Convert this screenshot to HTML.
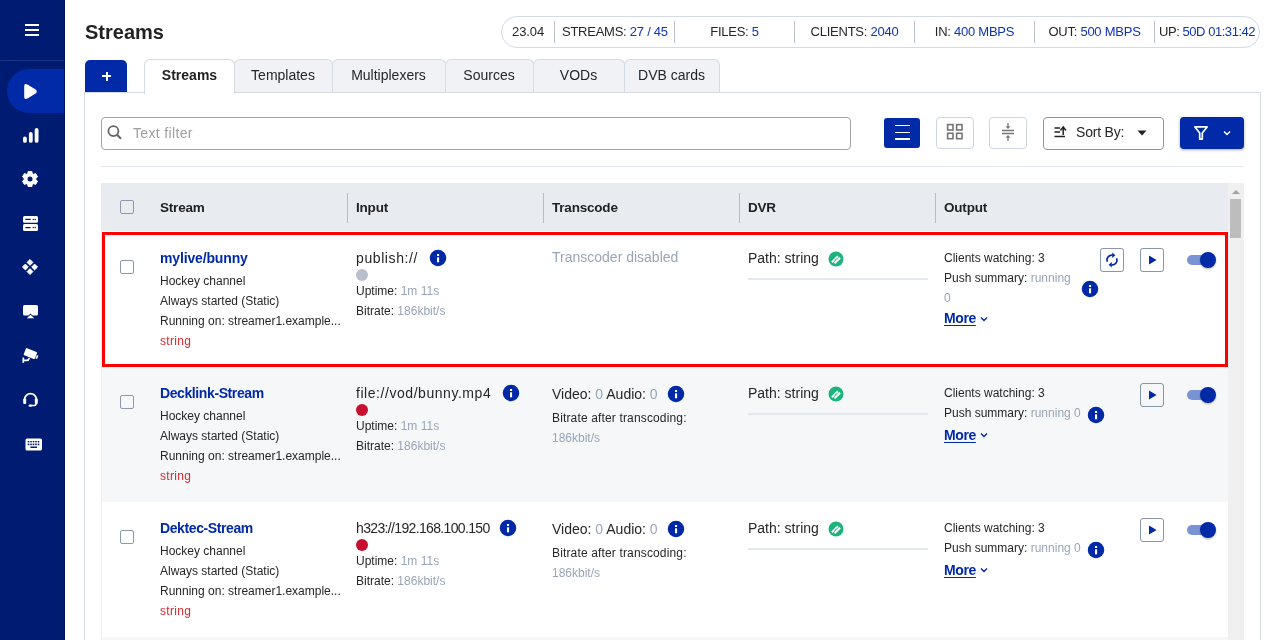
<!DOCTYPE html>
<html><head><meta charset="utf-8"><title>Streams</title>
<style>
html,body{margin:0;padding:0;width:1280px;height:640px;overflow:hidden;background:#fff;}
body{position:relative;font-family:"Liberation Sans",sans-serif;}
.t{position:absolute;white-space:nowrap;line-height:1;will-change:transform;}
.b{position:absolute;box-sizing:content-box;}
</style></head><body>
<div class="b" style="left:0px;top:0px;width:64px;height:640px;background:#001c72;"></div>
<div class="b" style="left:64px;top:0px;width:1px;height:640px;background:#00145c;"></div>
<div class="b" style="left:0px;top:60px;width:64px;height:1px;background:#1d3582;"></div>
<div class="b" style="left:25px;top:24px;width:14px;height:2px;background:#fff;"></div>
<div class="b" style="left:25px;top:29px;width:14px;height:2px;background:#fff;"></div>
<div class="b" style="left:25px;top:34px;width:14px;height:2px;background:#fff;"></div>
<div class="b" style="left:7px;top:69px;width:57px;height:44px;background:#002aa8;border-radius:22px 0 0 22px;"></div>
<svg class="b" style="left:21px;top:82px;" width="18" height="19" viewBox="0 0 18 19"><path d="M4 4.2 Q4 2 6 3.1 L14.2 8.2 Q15.8 9.5 14.2 10.8 L6 15.9 Q4 17 4 14.8 Z" fill="#fff" stroke="#fff" stroke-width="1.6" stroke-linejoin="round"/></svg>
<svg class="b" style="left:22px;top:127px;" width="18" height="17" viewBox="0 0 18 17"><rect x="1" y="9.5" width="3.8" height="6.3" rx="1.9" fill="#fff"/><rect x="6.9" y="5" width="3.8" height="10.8" rx="1.9" fill="#fff"/><rect x="12.7" y="1" width="3.8" height="14.8" rx="1.9" fill="#fff"/></svg>
<svg class="b" style="left:22px;top:171px;" width="16" height="16" viewBox="0 0 16 16"><path d="M6.11 0.43 L9.89 0.43 L10.21 2.53 L11.63 3.35 L13.61 2.58 L15.50 5.85 L13.84 7.18 L13.84 8.82 L15.50 10.15 L13.61 13.42 L11.63 12.65 L10.21 13.47 L9.89 15.57 L6.11 15.57 L5.79 13.47 L4.37 12.65 L2.39 13.42 L0.50 10.15 L2.16 8.82 L2.16 7.18 L0.50 5.85 L2.39 2.58 L4.37 3.35 L5.79 2.53 Z" fill="#fff" stroke="#fff" stroke-width="1" stroke-linejoin="round"/><circle cx="8" cy="8" r="2.5" fill="#001c72"/></svg>
<svg class="b" style="left:23px;top:216px;" width="15" height="15" viewBox="0 0 15 15"><rect x="0" y="0" width="15" height="6.8" rx="1.5" fill="#fff"/><rect x="0" y="8.1" width="15" height="6.8" rx="1.5" fill="#fff"/><rect x="2.2" y="2.8" width="5.6" height="1.3" rx=".6" fill="#001c72"/><circle cx="10.3" cy="3.4" r=".75" fill="#001c72"/><circle cx="12.2" cy="3.4" r=".75" fill="#001c72"/><rect x="2.2" y="10.9" width="5.6" height="1.3" rx=".6" fill="#001c72"/><circle cx="10.3" cy="11.5" r=".75" fill="#001c72"/><circle cx="12.2" cy="11.5" r=".75" fill="#001c72"/></svg>
<svg class="b" style="left:22px;top:259.2px;" width="16" height="16" viewBox="0 0 16 16"><path d="M8 0.5000000000000004 L10.9 3.4000000000000004 L8 6.300000000000001 L5.1 3.4000000000000004 Z" fill="#fff" stroke="#fff" stroke-width="1" stroke-linejoin="round"/><path d="M3.4000000000000004 5.1 L6.300000000000001 8 L3.4000000000000004 10.9 L0.5000000000000004 8 Z" fill="#fff" stroke="#fff" stroke-width="1" stroke-linejoin="round"/><path d="M12.6 5.1 L15.5 8 L12.6 10.9 L9.7 8 Z" fill="#fff" stroke="#fff" stroke-width="1" stroke-linejoin="round"/><path d="M8 9.7 L10.9 12.6 L8 15.5 L5.1 12.6 Z" fill="#fff" stroke="#fff" stroke-width="1" stroke-linejoin="round"/></svg>
<svg class="b" style="left:22px;top:303px;" width="17" height="17" viewBox="0 0 17 17"><rect x="1" y="2" width="15" height="10.6" rx="1.6" fill="#fff"/><path d="M4.8 15.2 L8.5 11.4 L12.2 15.2 Z" fill="#fff" stroke="#001c72" stroke-width="1.1"/><path d="M4.8 15.2 L8.5 11.8 L12.2 15.2 Z" fill="#fff"/></svg>
<svg class="b" style="left:21px;top:346px;" width="19" height="18" viewBox="0 0 19 18"><g transform="translate(0 1.5) rotate(22 9 7)"><rect x="3" y="2.2" width="12" height="7.6" rx="1" fill="#fff"/><rect x="15.6" y="5" width="1.6" height="3.6" fill="#fff"/></g><path d="M2.3 11.5 V16.8 M2.3 14.4 H6 Q7.6 14.4 8.3 12" stroke="#fff" stroke-width="1.7" fill="none"/></svg>
<svg class="b" style="left:22px;top:391px;" width="17" height="17" viewBox="0 0 17 17"><path d="M2.6 10 V8.5 A5.9 5.9 0 0 1 14.4 8.5 V10" stroke="#fff" stroke-width="1.8" fill="none"/><rect x="1.2" y="7.6" width="3" height="5.4" rx="1" fill="#fff"/><rect x="12.8" y="7.6" width="3" height="5.4" rx="1" fill="#fff"/><path d="M14.2 12.5 Q14.2 14.6 11.5 14.6 H8.4" stroke="#fff" stroke-width="1.5" fill="none"/><rect x="6.6" y="13.5" width="3.4" height="2.3" rx="1" fill="#fff"/></svg>
<svg class="b" style="left:24.5px;top:437.5px;" width="18" height="13" viewBox="0 0 18 13"><rect x="0.5" y="0.5" width="16.5" height="12" rx="1.6" fill="#fff"/><rect x="2.7" y="3" width="1.6" height="1.4" fill="#001c72"/><rect x="2.7" y="5.6" width="1.6" height="1.6" fill="#001c72"/><rect x="5.2" y="3" width="1.6" height="1.4" fill="#001c72"/><rect x="5.2" y="5.6" width="1.6" height="1.6" fill="#001c72"/><rect x="7.7" y="3" width="1.6" height="1.4" fill="#001c72"/><rect x="7.7" y="5.6" width="1.6" height="1.6" fill="#001c72"/><rect x="10.2" y="3" width="1.6" height="1.4" fill="#001c72"/><rect x="10.2" y="5.6" width="1.6" height="1.6" fill="#001c72"/><rect x="12.7" y="3" width="1.6" height="1.4" fill="#001c72"/><rect x="12.7" y="5.6" width="1.6" height="1.6" fill="#001c72"/><rect x="5.2" y="8.6" width="7" height="1.4" rx=".7" fill="#001c72"/></svg>
<div class="t " style="left:84.5px;top:21.67px;font-size:20px;font-weight:bold;color:#222;">Streams</div>
<div class="b" style="left:501px;top:16px;width:757px;height:30px;border:1px solid #d5dbe3;border-radius:16px;"></div>
<div class="b" style="left:554px;top:21px;width:1px;height:22px;background:#b8c0cb;"></div>
<div class="b" style="left:674px;top:21px;width:1px;height:22px;background:#b8c0cb;"></div>
<div class="b" style="left:794px;top:21px;width:1px;height:22px;background:#b8c0cb;"></div>
<div class="b" style="left:914px;top:21px;width:1px;height:22px;background:#b8c0cb;"></div>
<div class="b" style="left:1034px;top:21px;width:1px;height:22px;background:#b8c0cb;"></div>
<div class="b" style="left:1154px;top:21px;width:1px;height:22px;background:#b8c0cb;"></div>
<div class="t " style="left:512px;top:25.00px;font-size:13px;color:#262626;letter-spacing:-0.1px;">23.04</div>
<div class="t " style="left:562px;top:25.00px;font-size:13px;color:#262626;letter-spacing:-0.25px;">STREAMS: <span style="color:#0f34b5">27 / 45</span></div>
<div class="t " style="left:674px;top:25.00px;font-size:13px;color:#262626;letter-spacing:-0.25px;width:121px;text-align:center;">FILES: <span style="color:#0f34b5">5</span></div>
<div class="t " style="left:794px;top:25.00px;font-size:13px;color:#262626;letter-spacing:-0.25px;width:121px;text-align:center;">CLIENTS: <span style="color:#0f34b5">2040</span></div>
<div class="t " style="left:914px;top:25.00px;font-size:13px;color:#262626;letter-spacing:-0.25px;width:121px;text-align:center;">IN: <span style="color:#0f34b5">400 MBPS</span></div>
<div class="t " style="left:1034px;top:25.00px;font-size:13px;color:#262626;letter-spacing:-0.25px;width:121px;text-align:center;">OUT: <span style="color:#0f34b5">500 MBPS</span></div>
<div class="t " style="left:1159px;top:25.00px;font-size:13px;color:#262626;letter-spacing:-0.45px;">UP: <span style="color:#0f34b5">50D 01:31:42</span></div>
<div class="b" style="left:84px;top:92px;width:1175px;height:600px;border:1px solid #d5dbe3;background:#fff;"></div>
<div class="b" style="left:85px;top:60px;width:42px;height:32px;background:#002aa8;border-radius:5px 5px 0 0;"></div>
<div class="b" style="left:102px;top:75px;width:9px;height:2px;background:#fff;"></div>
<div class="b" style="left:105.5px;top:71.5px;width:2px;height:9px;background:#fff;"></div>
<div class="b" style="left:144px;top:59px;width:89px;height:34px;background:#fff;border:1px solid #d5dbe3;border-bottom:none;border-radius:6px 6px 0 0;z-index:2;"></div>
<div class="t " style="left:144px;top:68.15px;font-size:14px;font-weight:bold;color:#222;width:91px;text-align:center;z-index:3;">Streams</div>
<div class="b" style="left:234px;top:59px;width:97px;height:32px;background:#f0f2f6;border:1px solid #d5dbe3;border-bottom:none;border-radius:6px 6px 0 0;"></div>
<div class="t " style="left:234px;top:68.15px;font-size:14px;color:#262626;width:98px;text-align:center;">Templates</div>
<div class="b" style="left:332px;top:59px;width:112px;height:32px;background:#f0f2f6;border:1px solid #d5dbe3;border-bottom:none;border-radius:6px 6px 0 0;"></div>
<div class="t " style="left:332px;top:68.15px;font-size:14px;color:#262626;width:113px;text-align:center;">Multiplexers</div>
<div class="b" style="left:445px;top:59px;width:87px;height:32px;background:#f0f2f6;border:1px solid #d5dbe3;border-bottom:none;border-radius:6px 6px 0 0;"></div>
<div class="t " style="left:445px;top:68.15px;font-size:14px;color:#262626;width:88px;text-align:center;">Sources</div>
<div class="b" style="left:533px;top:59px;width:90px;height:32px;background:#f0f2f6;border:1px solid #d5dbe3;border-bottom:none;border-radius:6px 6px 0 0;"></div>
<div class="t " style="left:533px;top:68.15px;font-size:14px;color:#262626;width:91px;text-align:center;">VODs</div>
<div class="b" style="left:624px;top:59px;width:94px;height:32px;background:#f0f2f6;border:1px solid #d5dbe3;border-bottom:none;border-radius:6px 6px 0 0;"></div>
<div class="t " style="left:624px;top:68.15px;font-size:14px;color:#262626;width:95px;text-align:center;">DVB cards</div>
<div class="b" style="left:101px;top:117px;width:748px;height:31px;border:1px solid #a3a3a3;border-radius:4px;"></div>
<svg class="b" style="left:106px;top:124px;" width="17" height="17" viewBox="0 0 17 17"><circle cx="7.4" cy="7.1" r="5" stroke="#666" stroke-width="1.8" fill="none"/><path d="M11 10.7 L15 14.7" stroke="#666" stroke-width="2.1"/></svg>
<div class="t " style="left:133px;top:126.35px;font-size:14px;color:#9e9e9e;letter-spacing:0.35px;">Text filter</div>
<div class="b" style="left:884px;top:118px;width:36px;height:30px;background:#002aa8;border-radius:3px;"></div>
<div class="b" style="left:894.5px;top:124.6px;width:15px;height:1.6px;background:#fff;"></div>
<div class="b" style="left:894.5px;top:131.6px;width:15px;height:1.6px;background:#fff;"></div>
<div class="b" style="left:894.5px;top:138px;width:15px;height:1.6px;background:#fff;"></div>
<div class="b" style="left:936px;top:117px;width:36px;height:30px;border:1px solid #cdd5df;border-radius:4px;"></div>
<svg class="b" style="left:946px;top:123px;" width="18" height="18" viewBox="0 0 18 18"><rect x="1.6" y="1.6" width="5.4" height="5.4" stroke="#757575" stroke-width="1.6" fill="none"/><rect x="10.6" y="1.6" width="5.4" height="5.4" stroke="#757575" stroke-width="1.6" fill="none"/><rect x="1.6" y="10.3" width="5.4" height="5.4" stroke="#757575" stroke-width="1.6" fill="none"/><rect x="10.6" y="10.3" width="5.4" height="5.4" stroke="#757575" stroke-width="1.6" fill="none"/></svg>
<div class="b" style="left:989px;top:117px;width:36px;height:30px;border:1px solid #cdd5df;border-radius:4px;"></div>
<svg class="b" style="left:1000px;top:121px;" width="16" height="22" viewBox="0 0 16 22"><path d="M2 9.5 H14 M2 12.5 H14" stroke="#777" stroke-width="1.3"/><path d="M8 2 V7" stroke="#777" stroke-width="1.3"/><path d="M5.6 5.2 L8 8 L10.4 5.2 Z" fill="#777"/><path d="M8 15 V20" stroke="#777" stroke-width="1.3"/><path d="M5.6 16.8 L8 14 L10.4 16.8 Z" fill="#777"/></svg>
<div class="b" style="left:1043px;top:117px;width:119px;height:31px;border:1px solid #8896ab;border-radius:4px;"></div>
<svg class="b" style="left:1053px;top:125px;" width="16" height="14" viewBox="0 0 16 14"><path d="M1.5 3 H7 M1.5 7 H7 M1.5 11.5 H12" stroke="#222" stroke-width="1.5"/><path d="M10.2 10 V2.8" stroke="#222" stroke-width="1.5"/><path d="M7.4 5.5 L10.2 2 L13 5.5" stroke="#222" stroke-width="1.5" fill="none"/></svg>
<div class="t " style="left:1076px;top:125.15px;font-size:14px;color:#262626;letter-spacing:-0.2px;">Sort By:</div>
<svg class="b" style="left:1136px;top:129px;" width="12" height="8" viewBox="0 0 12 8"><path d="M1.5 1.5 H10.5 L6 6.5 Z" fill="#222"/></svg>
<div class="b" style="left:1180px;top:117px;width:64px;height:32px;background:#002aa8;border-radius:4px;box-shadow:0 1px 3px rgba(0,0,0,.35);"></div>
<svg class="b" style="left:1192px;top:124px;" width="18" height="18" viewBox="0 0 18 18"><path d="M2.9 2.9 H15.1 L10.3 9.1 V15.1 H7.7 V9.1 Z" stroke="#fff" stroke-width="1.7" fill="none" stroke-linejoin="round"/></svg>
<svg class="b" style="left:1222px;top:129px;" width="10" height="8" viewBox="0 0 10 8"><path d="M2 2.5 L5 5.5 L8 2.5" stroke="#fff" stroke-width="1.5" fill="none"/></svg>
<div class="b" style="left:101px;top:166px;width:1142px;height:1px;background:#e3e8ee;"></div>
<div class="b" style="left:101px;top:183px;width:1127px;height:48px;background:#e8ebf0;"></div>
<div class="b" style="left:120px;top:200px;width:12px;height:12px;border:1.6px solid #8d99ab;border-radius:2px;"></div>
<div class="b" style="left:347px;top:193px;width:1px;height:30px;background:#b5bdc8;"></div>
<div class="b" style="left:543px;top:193px;width:1px;height:30px;background:#b5bdc8;"></div>
<div class="b" style="left:739px;top:193px;width:1px;height:30px;background:#b5bdc8;"></div>
<div class="b" style="left:935px;top:193px;width:1px;height:30px;background:#b5bdc8;"></div>
<div class="t " style="left:160px;top:201.07px;font-size:13.5px;font-weight:bold;color:#222;letter-spacing:-0.2px;">Stream</div>
<div class="t " style="left:356px;top:201.07px;font-size:13.5px;font-weight:bold;color:#222;letter-spacing:-0.2px;">Input</div>
<div class="t " style="left:552px;top:201.07px;font-size:13.5px;font-weight:bold;color:#222;letter-spacing:-0.2px;">Transcode</div>
<div class="t " style="left:748px;top:201.07px;font-size:13.5px;font-weight:bold;color:#222;letter-spacing:-0.2px;">DVR</div>
<div class="t " style="left:944px;top:201.07px;font-size:13.5px;font-weight:bold;color:#222;letter-spacing:-0.2px;">Output</div>
<div class="b" style="left:1228px;top:183px;width:16px;height:457px;background:#f0f0f0;"></div>
<svg class="b" style="left:1228px;top:186px;" width="16" height="10" viewBox="0 0 16 10"><path d="M4 8 L8 4 L12 8 Z" fill="#a3a3a3"/></svg>
<div class="b" style="left:1230px;top:199px;width:11px;height:39px;background:#bdbdbd;"></div>
<div class="b" style="left:101px;top:231px;width:1px;height:409px;background:#eef0f3;"></div>
<div class="b" style="left:102px;top:637px;width:1126px;height:10px;background:#f6f7f9;"></div>
<div class="b" style="left:120px;top:260px;width:12px;height:12px;border:1.6px solid #8d99ab;border-radius:2px;"></div>
<div class="t " style="left:160px;top:251.15px;font-size:14px;font-weight:bold;color:#0029a8;letter-spacing:-0.15px;">mylive/bunny</div>
<div class="t " style="left:160px;top:274.84px;font-size:12px;color:#262626;">Hockey channel</div>
<div class="t " style="left:160px;top:294.84px;font-size:12px;color:#262626;">Always started (Static)</div>
<div class="t " style="left:160px;top:314.84px;font-size:12px;color:#262626;">Running on: streamer1.example...</div>
<div class="t " style="left:160px;top:334.84px;font-size:12px;color:#d42a2e;letter-spacing:0.3px;">string</div>
<div class="t " style="left:356px;top:250.65px;font-size:14px;color:#262626;letter-spacing:0.6px;">publish://</div>
<svg class="b" style="left:429px;top:249px;" width="18" height="18" viewBox="0 0 18 18"><circle cx="9" cy="9" r="8.25" fill="#0029a8"/><rect x="8" y="5" width="2.1" height="2" fill="#fff"/><rect x="8" y="8.3" width="2.1" height="5" fill="#fff"/></svg>
<div class="b" style="left:356px;top:269px;width:12px;height:12px;background:#b9bfcc;border-radius:6px;"></div>
<div class="t " style="left:356px;top:285.24px;font-size:12px;color:#262626;">Uptime: <span style="color:#9aa5b8">1m 11s</span></div>
<div class="t " style="left:356px;top:305.14px;font-size:12px;color:#262626;">Bitrate: <span style="color:#9aa5b8">186kbit/s</span></div>
<div class="t " style="left:552px;top:250.15px;font-size:14px;color:#9aa5b8;">Transcoder disabled</div>
<div class="t " style="left:748px;top:251.15px;font-size:14px;color:#262626;">Path: string</div>
<svg class="b" style="left:827.5px;top:250.5px;" width="16" height="16" viewBox="0 0 16 16"><circle cx="8" cy="8" r="7.5" fill="#1bb57c"/><path d="M4.6 10.6 L9.2 6 M7.2 11.6 L11.4 7.4" stroke="#fff" stroke-width="2" stroke-linecap="square"/><path d="M6.5 9.5 L8.5 7.5" stroke="#1bb57c" stroke-width="0.8"/></svg>
<div class="b" style="left:748px;top:278px;width:180px;height:2px;background:#e3e7ee;"></div>
<div class="t " style="left:944px;top:252.34px;font-size:12px;color:#262626;">Clients watching: 3</div>
<div class="t " style="left:944px;top:272.34px;font-size:12px;color:#262626;">Push summary: <span style="color:#9aa5b8">running</span></div>
<div class="t " style="left:944px;top:292.04px;font-size:12px;color:#9aa5b8;">0</div>
<svg class="b" style="left:1081px;top:280px;" width="18" height="18" viewBox="0 0 18 18"><circle cx="9" cy="9" r="8.25" fill="#0029a8"/><rect x="8" y="5" width="2.1" height="2" fill="#fff"/><rect x="8" y="8.3" width="2.1" height="5" fill="#fff"/></svg>
<div class="b" style="left:1100px;top:248px;width:22px;height:22px;border:1px solid #8896ab;border-radius:3px;"></div>
<svg class="b" style="left:1100px;top:248px;" width="24" height="24" viewBox="0 0 24 24"><path d="M7.4 13.8 A4.8 4.8 0 0 1 12.4 7.2" stroke="#0029a8" stroke-width="1.7" fill="none"/><path d="M12.2 4.4 L15.4 7.2 L12.2 10 Z" fill="#0029a8"/><path d="M16.6 10.2 A4.8 4.8 0 0 1 11.6 16.8" stroke="#0029a8" stroke-width="1.7" fill="none"/><path d="M11.8 14 L8.6 16.8 L11.8 19.6 Z" fill="#0029a8"/></svg>
<div class="t " style="left:944px;top:311.15px;font-size:14px;font-weight:bold;color:#0029a8;letter-spacing:-0.4px;text-decoration:underline;text-underline-offset:1.5px;">More</div>
<svg class="b" style="left:979px;top:315px;" width="10" height="8" viewBox="0 0 10 8"><path d="M2 2.5 L5 5.5 L8 2.5" stroke="#0029a8" stroke-width="1.4" fill="none"/></svg>
<div class="b" style="left:1140px;top:248px;width:22px;height:22px;border:1px solid #8896ab;border-radius:3px;"></div>
<svg class="b" style="left:1148px;top:255px;" width="10" height="10" viewBox="0 0 10 10"><path d="M1 0.6 L8.6 5 L1 9.4 Z" fill="#0029a8"/></svg>
<div class="b" style="left:1187px;top:255px;width:22px;height:10px;background:#7b93d4;border-radius:5px;"></div>
<div class="b" style="left:1200px;top:252px;width:16px;height:16px;background:#0029a8;border-radius:8px;box-shadow:0 1px 2px rgba(0,0,0,.3);"></div>
<div class="b" style="left:102px;top:367px;width:1126px;height:135px;background:#f6f7f9;"></div>
<div class="b" style="left:120px;top:395px;width:12px;height:12px;border:1.6px solid #8d99ab;border-radius:2px;"></div>
<div class="t " style="left:160px;top:386.15px;font-size:14px;font-weight:bold;color:#0029a8;letter-spacing:-0.4px;">Decklink-Stream</div>
<div class="t " style="left:160px;top:409.84px;font-size:12px;color:#262626;">Hockey channel</div>
<div class="t " style="left:160px;top:429.84px;font-size:12px;color:#262626;">Always started (Static)</div>
<div class="t " style="left:160px;top:449.84px;font-size:12px;color:#262626;">Running on: streamer1.example...</div>
<div class="t " style="left:160px;top:469.84px;font-size:12px;color:#d42a2e;letter-spacing:0.3px;">string</div>
<div class="t " style="left:356px;top:385.65px;font-size:14px;color:#262626;letter-spacing:0.55px;">file://vod/bunny.mp4</div>
<svg class="b" style="left:502px;top:384px;" width="18" height="18" viewBox="0 0 18 18"><circle cx="9" cy="9" r="8.25" fill="#0029a8"/><rect x="8" y="5" width="2.1" height="2" fill="#fff"/><rect x="8" y="8.3" width="2.1" height="5" fill="#fff"/></svg>
<div class="b" style="left:356px;top:404px;width:12px;height:12px;background:#c8102e;border-radius:6px;"></div>
<div class="t " style="left:356px;top:420.24px;font-size:12px;color:#262626;">Uptime: <span style="color:#9aa5b8">1m 11s</span></div>
<div class="t " style="left:356px;top:440.14px;font-size:12px;color:#262626;">Bitrate: <span style="color:#9aa5b8">186kbit/s</span></div>
<div class="t " style="left:552px;top:386.65px;font-size:14px;color:#262626;">Video: <span style="color:#9aa5b8">0</span> Audio: <span style="color:#9aa5b8">0</span></div>
<svg class="b" style="left:667px;top:385px;" width="18" height="18" viewBox="0 0 18 18"><circle cx="9" cy="9" r="8.25" fill="#0029a8"/><rect x="8" y="5" width="2.1" height="2" fill="#fff"/><rect x="8" y="8.3" width="2.1" height="5" fill="#fff"/></svg>
<div class="t " style="left:552px;top:411.84px;font-size:12px;color:#262626;letter-spacing:0.15px;">Bitrate after transcoding:</div>
<div class="t " style="left:552px;top:431.84px;font-size:12px;color:#9aa5b8;">186kbit/s</div>
<div class="t " style="left:748px;top:386.15px;font-size:14px;color:#262626;">Path: string</div>
<svg class="b" style="left:827.5px;top:385.5px;" width="16" height="16" viewBox="0 0 16 16"><circle cx="8" cy="8" r="7.5" fill="#1bb57c"/><path d="M4.6 10.6 L9.2 6 M7.2 11.6 L11.4 7.4" stroke="#fff" stroke-width="2" stroke-linecap="square"/><path d="M6.5 9.5 L8.5 7.5" stroke="#1bb57c" stroke-width="0.8"/></svg>
<div class="b" style="left:748px;top:413px;width:180px;height:2px;background:#e3e7ee;"></div>
<div class="t " style="left:944px;top:387.34px;font-size:12px;color:#262626;">Clients watching: 3</div>
<div class="t " style="left:944px;top:407.34px;font-size:12px;color:#262626;">Push summary: <span style="color:#9aa5b8">running 0</span></div>
<svg class="b" style="left:1087px;top:406px;" width="18" height="18" viewBox="0 0 18 18"><circle cx="9" cy="9" r="8.25" fill="#0029a8"/><rect x="8" y="5" width="2.1" height="2" fill="#fff"/><rect x="8" y="8.3" width="2.1" height="5" fill="#fff"/></svg>
<div class="t " style="left:944px;top:427.55px;font-size:14px;font-weight:bold;color:#0029a8;letter-spacing:-0.4px;text-decoration:underline;text-underline-offset:1.5px;">More</div>
<svg class="b" style="left:979px;top:431.4px;" width="10" height="8" viewBox="0 0 10 8"><path d="M2 2.5 L5 5.5 L8 2.5" stroke="#0029a8" stroke-width="1.4" fill="none"/></svg>
<div class="b" style="left:1140px;top:383px;width:22px;height:22px;border:1px solid #8896ab;border-radius:3px;"></div>
<svg class="b" style="left:1148px;top:390px;" width="10" height="10" viewBox="0 0 10 10"><path d="M1 0.6 L8.6 5 L1 9.4 Z" fill="#0029a8"/></svg>
<div class="b" style="left:1187px;top:390px;width:22px;height:10px;background:#7b93d4;border-radius:5px;"></div>
<div class="b" style="left:1200px;top:387px;width:16px;height:16px;background:#0029a8;border-radius:8px;box-shadow:0 1px 2px rgba(0,0,0,.3);"></div>
<div class="b" style="left:120px;top:530px;width:12px;height:12px;border:1.6px solid #8d99ab;border-radius:2px;"></div>
<div class="t " style="left:160px;top:521.15px;font-size:14px;font-weight:bold;color:#0029a8;letter-spacing:-0.4px;">Dektec-Stream</div>
<div class="t " style="left:160px;top:544.84px;font-size:12px;color:#262626;">Hockey channel</div>
<div class="t " style="left:160px;top:564.84px;font-size:12px;color:#262626;">Always started (Static)</div>
<div class="t " style="left:160px;top:584.84px;font-size:12px;color:#262626;">Running on: streamer1.example...</div>
<div class="t " style="left:160px;top:604.84px;font-size:12px;color:#d42a2e;letter-spacing:0.3px;">string</div>
<div class="t " style="left:356px;top:520.65px;font-size:14px;color:#262626;letter-spacing:-0.65px;">h323://192.168.100.150</div>
<svg class="b" style="left:499px;top:519px;" width="18" height="18" viewBox="0 0 18 18"><circle cx="9" cy="9" r="8.25" fill="#0029a8"/><rect x="8" y="5" width="2.1" height="2" fill="#fff"/><rect x="8" y="8.3" width="2.1" height="5" fill="#fff"/></svg>
<div class="b" style="left:356px;top:539px;width:12px;height:12px;background:#c8102e;border-radius:6px;"></div>
<div class="t " style="left:356px;top:555.24px;font-size:12px;color:#262626;">Uptime: <span style="color:#9aa5b8">1m 11s</span></div>
<div class="t " style="left:356px;top:575.14px;font-size:12px;color:#262626;">Bitrate: <span style="color:#9aa5b8">186kbit/s</span></div>
<div class="t " style="left:552px;top:521.65px;font-size:14px;color:#262626;">Video: <span style="color:#9aa5b8">0</span> Audio: <span style="color:#9aa5b8">0</span></div>
<svg class="b" style="left:667px;top:520px;" width="18" height="18" viewBox="0 0 18 18"><circle cx="9" cy="9" r="8.25" fill="#0029a8"/><rect x="8" y="5" width="2.1" height="2" fill="#fff"/><rect x="8" y="8.3" width="2.1" height="5" fill="#fff"/></svg>
<div class="t " style="left:552px;top:546.84px;font-size:12px;color:#262626;letter-spacing:0.15px;">Bitrate after transcoding:</div>
<div class="t " style="left:552px;top:566.84px;font-size:12px;color:#9aa5b8;">186kbit/s</div>
<div class="t " style="left:748px;top:521.15px;font-size:14px;color:#262626;">Path: string</div>
<svg class="b" style="left:827.5px;top:520.5px;" width="16" height="16" viewBox="0 0 16 16"><circle cx="8" cy="8" r="7.5" fill="#1bb57c"/><path d="M4.6 10.6 L9.2 6 M7.2 11.6 L11.4 7.4" stroke="#fff" stroke-width="2" stroke-linecap="square"/><path d="M6.5 9.5 L8.5 7.5" stroke="#1bb57c" stroke-width="0.8"/></svg>
<div class="b" style="left:748px;top:548px;width:180px;height:2px;background:#e3e7ee;"></div>
<div class="t " style="left:944px;top:522.34px;font-size:12px;color:#262626;">Clients watching: 3</div>
<div class="t " style="left:944px;top:542.34px;font-size:12px;color:#262626;">Push summary: <span style="color:#9aa5b8">running 0</span></div>
<svg class="b" style="left:1087px;top:541px;" width="18" height="18" viewBox="0 0 18 18"><circle cx="9" cy="9" r="8.25" fill="#0029a8"/><rect x="8" y="5" width="2.1" height="2" fill="#fff"/><rect x="8" y="8.3" width="2.1" height="5" fill="#fff"/></svg>
<div class="t " style="left:944px;top:562.55px;font-size:14px;font-weight:bold;color:#0029a8;letter-spacing:-0.4px;text-decoration:underline;text-underline-offset:1.5px;">More</div>
<svg class="b" style="left:979px;top:566.4px;" width="10" height="8" viewBox="0 0 10 8"><path d="M2 2.5 L5 5.5 L8 2.5" stroke="#0029a8" stroke-width="1.4" fill="none"/></svg>
<div class="b" style="left:1140px;top:518px;width:22px;height:22px;border:1px solid #8896ab;border-radius:3px;"></div>
<svg class="b" style="left:1148px;top:525px;" width="10" height="10" viewBox="0 0 10 10"><path d="M1 0.6 L8.6 5 L1 9.4 Z" fill="#0029a8"/></svg>
<div class="b" style="left:1187px;top:525px;width:22px;height:10px;background:#7b93d4;border-radius:5px;"></div>
<div class="b" style="left:1200px;top:522px;width:16px;height:16px;background:#0029a8;border-radius:8px;box-shadow:0 1px 2px rgba(0,0,0,.3);"></div>
<div class="b" style="left:102px;top:232px;width:1120px;height:129px;border:3px solid #ff0000;z-index:5;"></div>
</body></html>
